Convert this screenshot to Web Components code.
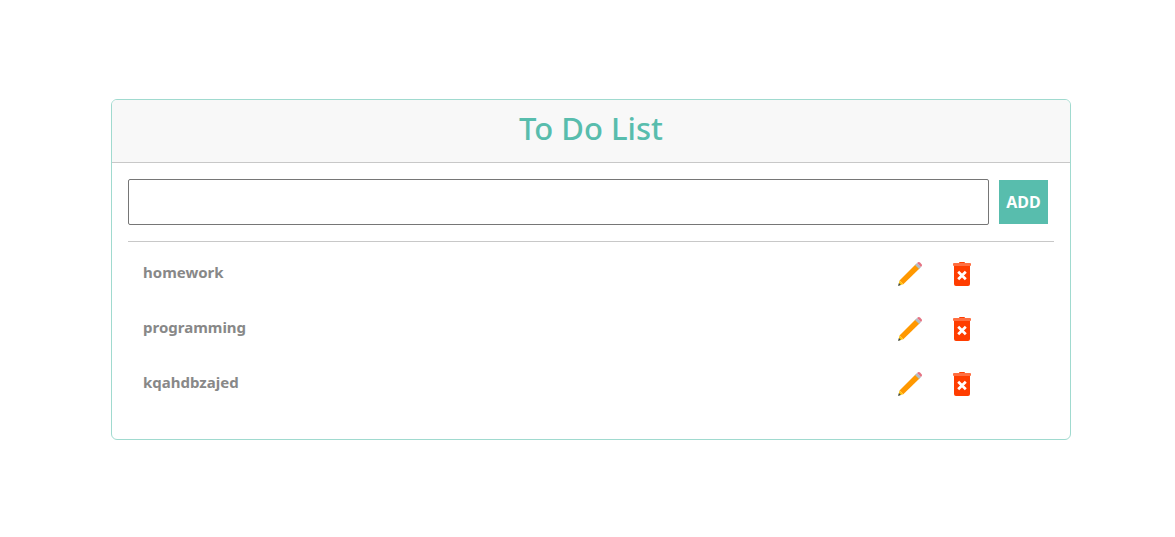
<!DOCTYPE html>
<html lang="en">
<head>
<meta charset="utf-8">
<meta name="viewport" content="width=device-width, initial-scale=1">
<title>To Do List</title>
<style>
  body { margin: 0; background: #fff; font: 16px/24px "Segoe UI", "Noto Sans", sans-serif; }
</style>
</head>
<body>
<todo-card>
  <span slot="title">To Do List</span>
  <todo-form></todo-form>
  <todo-item>homework</todo-item>
  <todo-item>programming</todo-item>
  <todo-item>kqahdbzajed</todo-item>
</todo-card>

<template id="card">
  <style>
    :host { display: block; padding: 99px 104px 16px 111px; }
    section { border: 1px solid #a0dacf; border-radius: 6px; overflow: hidden; background: #fff; }
    header { padding: 8px 16px 14px; background: #f8f8f8; border-bottom: 1px solid #c8c8c8; }
    h1 { margin: 0; font-size: 31px; line-height: 40px; font-weight: 500; text-align: center; color: #58bdad; }
    .body { padding: 16px 16px 28px; }
  </style>
  <section>
    <header><h1><slot name="title"></slot></h1></header>
    <div class="body"><slot></slot></div>
  </section>
</template>

<template id="form">
  <style>
    :host { display: block; padding-bottom: 16px; margin-bottom: 4px; border-bottom: 1px solid #c8c8c8; }
    form { display: flex; align-items: center; gap: 10px; margin: 0; padding-right: 6px; }
    input { flex: 1; min-width: 0; height: 46px; box-sizing: border-box; margin: 0; padding: 0 8px; border: 1px solid #767676; border-radius: 2px; background: #fff; font: inherit; color: #555; }
    button { width: 49px; height: 44px; padding: 0; border: 0; background: #58bdad; color: #fff; font: inherit; font-weight: 700; cursor: pointer; }
  </style>
  <form>
    <input type="text" aria-label="New task">
    <button type="submit">ADD</button>
  </form>
</template>

<template id="item">
  <style>
    :host { display: flex; align-items: center; height: 55px; padding: 0 80px 0 15px; }
    .name { flex: 1; font-size: 15px; font-weight: 700; color: #888; padding-bottom: 4px; }
    .actions { display: flex; gap: 28px; }
    button { width: 24px; height: 24px; padding: 0; border: 0; background: none; cursor: pointer; }
    svg { display: block; }
  </style>
  <span class="name"><slot></slot></span>
  <span class="actions">
    <button type="button" aria-label="Edit">
      <svg width="24" height="24" viewBox="0 0 24 24">
        <path fill="#ff9800" d="M17.500 2.500l4 4L5.300 22.200l-3.800-3.800z"/>
        <path fill="#b0bec5" d="M17 2.900l2-2 4.100 4.100-2 2z"/>
        <path fill="#e57383" d="M19 1l.7-.6q1.300-.9 2.400.2l1.300 1.300q1.100 1.100.2 2.400l-.6.700z"/>
        <path fill="#ffc107" d="M1.500 18.400l3.800 3.800L.5 23.500z"/>
        <path fill="#37474f" d="M.9 21.100L.1 23.900l2.800-.9z"/>
      </svg>
    </button>
    <button type="button" aria-label="Delete">
      <svg width="24" height="24" viewBox="0 0 24 24">
        <path fill="#ff3d00" d="M4 3.500h16v18.500q0 2-2 2H6q-2 0-2-2zM9 1.500V1q0-1 1-1h4q1 0 1 1v.5z"/>
        <rect fill="#ff6e40" x="3" y="1" width="18" height="3" rx="1"/>
        <path stroke="#fff" stroke-width="2.700" d="M8.200 9.700l7.600 7.600M15.800 9.700l-7.600 7.600"/>
      </svg>
    </button>
  </span>
</template>

<script>
  function define(name, id) {
    customElements.define(name, class extends HTMLElement {
      constructor() {
        super();
        this.attachShadow({ mode: 'open' })
          .append(document.getElementById(id).content.cloneNode(true));
        const form = this.shadowRoot.querySelector('form');
        if (form) form.addEventListener('submit', e => {
          e.preventDefault();
          const input = form.querySelector('input');
          if (!input.value.trim()) return;
          const item = document.createElement('todo-item');
          item.textContent = input.value.trim();
          this.parentElement.append(item);
          input.value = '';
        });
        const remove = this.shadowRoot.querySelector('[aria-label="Delete"]');
        if (remove) remove.addEventListener('click', () => this.remove());
        const edit = this.shadowRoot.querySelector('[aria-label="Edit"]');
        if (edit) edit.addEventListener('click', () => {
          const text = prompt('Edit task', this.textContent);
          if (text) this.textContent = text;
        });
      }
    });
  }
  define('todo-card', 'card');
  define('todo-form', 'form');
  define('todo-item', 'item');
</script>
</body>
</html>
